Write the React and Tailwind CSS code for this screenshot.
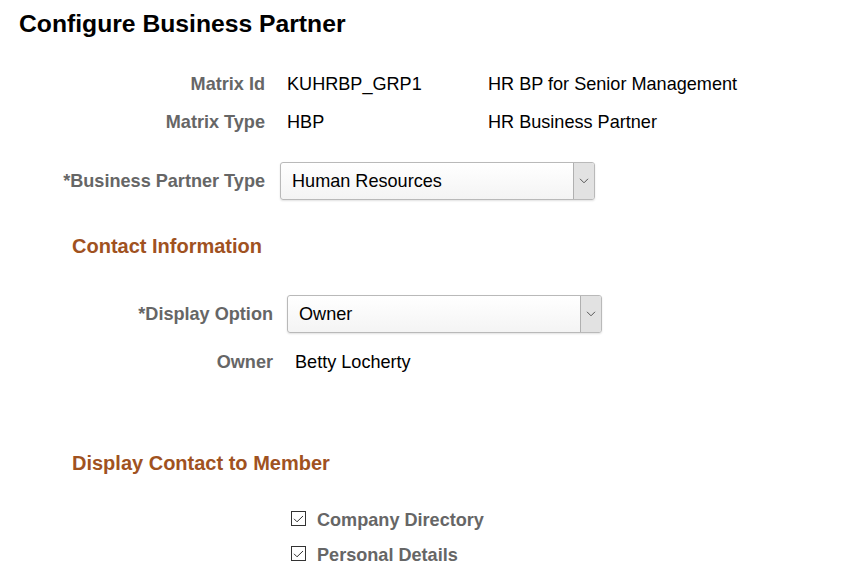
import React from 'react';

const labelCls = "text-right font-bold text-[18.1px] text-[#666666]";

const Chevron = () => (
    <svg width="10" height="6" viewBox="0 0 10 6" fill="none">
        <path d="M1 0.8 L5 4.8 L9 0.8" stroke="#555" strokeWidth="1" />
    </svg>
);

const Dropdown = ({ value }) => (
    <div className="flex w-[315px] h-[38px] rounded-[3px] border border-[#b9b9b9] bg-gradient-to-b from-white to-[#f4f4f4] shadow-[0_1px_2px_rgba(0,0,0,0.12)] overflow-hidden">
        <div className="flex-1 flex items-center pl-[11px] pt-[2px] text-[18.1px] text-black">{value}</div>
        <div className="w-[21px] flex items-center justify-center bg-[#e2e2e2] border-l border-[#b0b0b0]">
            <Chevron />
        </div>
    </div>
);

const CheckRow = ({ label }) => (
    <div className="flex items-center h-[35px] pl-[291px]">
        <div className="w-[15px] h-[15px] mb-[4px] border border-[#333] bg-white flex items-center justify-center">
            <svg width="11" height="8" viewBox="0 0 11 8" fill="none">
                <path d="M1 3.8 L4 6.8 L10 1" stroke="#333" strokeWidth="1" />
            </svg>
        </div>
        <span className="ml-[11px] font-bold text-[18.1px] text-[#666666]">{label}</span>
    </div>
);

const App = () => {
    return (
        <div className="w-[868px] h-[580px] overflow-hidden bg-white font-['Liberation_Sans',Arial,sans-serif] text-black">
            <h1 className="pl-[19px] pt-[9px] h-[39px] leading-[30px] text-[24.7px] font-bold text-black">
                Configure Business Partner
            </h1>

            {/* Matrix details */}
            <div className="mt-[27px]">
                <div className="flex items-center h-[38px]">
                    <div className={`w-[265px] ${labelCls}`}>Matrix Id</div>
                    <div className="ml-[22px] w-[201px] text-[18.1px]">KUHRBP_GRP1</div>
                    <div className="text-[18.1px]">HR BP for Senior Management</div>
                </div>
                <div className="flex items-center h-[38px]">
                    <div className={`w-[265px] ${labelCls}`}>Matrix Type</div>
                    <div className="ml-[22px] w-[201px] text-[18.1px]">HBP</div>
                    <div className="text-[18.1px]">HR Business Partner</div>
                </div>
                <div className="flex items-center mt-[20px]">
                    <div className={`w-[265px] pt-[1px] ${labelCls}`}>*Business Partner Type</div>
                    <div className="ml-[15px]">
                        <Dropdown value="Human Resources" />
                    </div>
                </div>
            </div>

            {/* Contact Information */}
            <h2 className="mt-[31px] pl-[72px] h-[30px] leading-[30px] text-[20px] font-bold text-[#a0521f]">
                Contact Information
            </h2>
            <div className="mt-[34px]">
                <div className="flex items-center">
                    <div className={`w-[273px] pt-[2px] ${labelCls}`}>*Display Option</div>
                    <div className="ml-[14px]">
                        <Dropdown value="Owner" />
                    </div>
                </div>
                <div className="flex items-center h-[38px] mt-[10px] pt-[1px]">
                    <div className={`w-[273px] ${labelCls}`}>Owner</div>
                    <div className="ml-[22px] text-[18.1px]">Betty Locherty</div>
                </div>
            </div>

            {/* Display Contact to Member */}
            <h2 className="mt-[67px] pl-[72px] h-[30px] leading-[30px] text-[20px] font-bold text-[#a0521f]">
                Display Contact to Member
            </h2>
            <div className="mt-[25px]">
                <CheckRow label="Company Directory" />
                <CheckRow label="Personal Details" />
            </div>
        </div>
    );
};

export default App;
